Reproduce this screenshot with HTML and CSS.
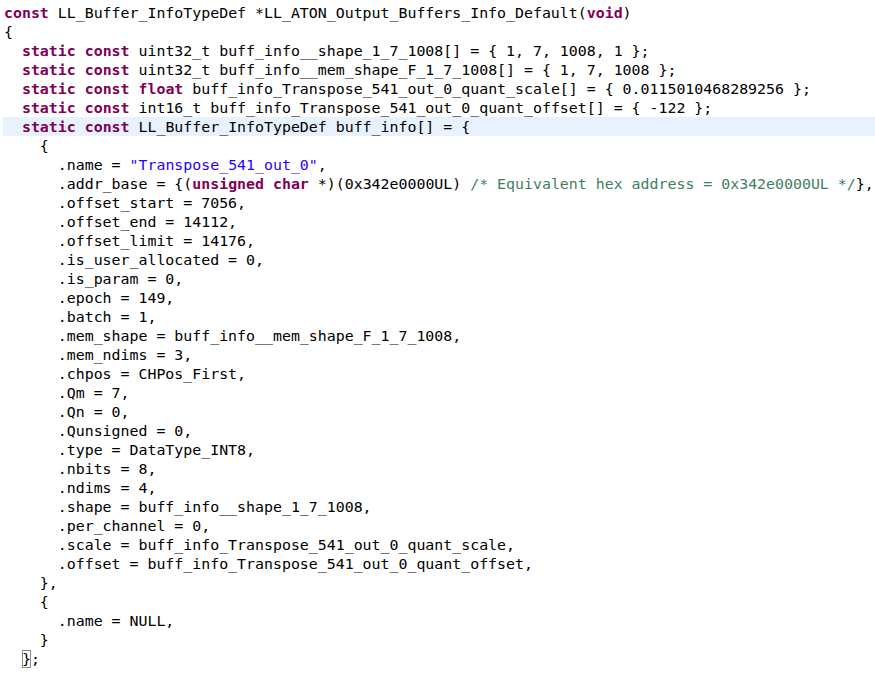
FILE: index.html
```html
<!DOCTYPE html>
<html>
<head>
<meta charset="utf-8">
<link rel="stylesheet" href="styles.css">
</head>
<body>
<div class="editor">
<div class="ln"><span class="kw">const</span> LL_Buffer_InfoTypeDef *LL_ATON_Output_Buffers_Info_Default(<span class="kw">void</span>)</div>
<div class="ln">{</div>
<div class="ln">  <span class="kw">static</span> <span class="kw">const</span> uint32_t buff_info__shape_1_7_1008[] = { 1, 7, 1008, 1 };</div>
<div class="ln">  <span class="kw">static</span> <span class="kw">const</span> uint32_t buff_info__mem_shape_F_1_7_1008[] = { 1, 7, 1008 };</div>
<div class="ln">  <span class="kw">static</span> <span class="kw">const</span> <span class="kw">float</span> buff_info_Transpose_541_out_0_quant_scale[] = { 0.0115010468289256 };</div>
<div class="ln">  <span class="kw">static</span> <span class="kw">const</span> int16_t buff_info_Transpose_541_out_0_quant_offset[] = { -122 };</div>
<div class="ln current">  <span class="kw">static</span> <span class="kw">const</span> LL_Buffer_InfoTypeDef buff_info[] = {</div>
<div class="ln">    {</div>
<div class="ln">      .name = <span class="str">"Transpose_541_out_0"</span>,</div>
<div class="ln">      .addr_base = {(<span class="kw">unsigned</span> <span class="kw">char</span> *)(0x342e0000UL) <span class="cm">/* Equivalent hex address = 0x342e0000UL */</span>},</div>
<div class="ln">      .offset_start = 7056,</div>
<div class="ln">      .offset_end = 14112,</div>
<div class="ln">      .offset_limit = 14176,</div>
<div class="ln">      .is_user_allocated = 0,</div>
<div class="ln">      .is_param = 0,</div>
<div class="ln">      .epoch = 149,</div>
<div class="ln">      .batch = 1,</div>
<div class="ln">      .mem_shape = buff_info__mem_shape_F_1_7_1008,</div>
<div class="ln">      .mem_ndims = 3,</div>
<div class="ln">      .chpos = CHPos_First,</div>
<div class="ln">      .Qm = 7,</div>
<div class="ln">      .Qn = 0,</div>
<div class="ln">      .Qunsigned = 0,</div>
<div class="ln">      .type = DataType_INT8,</div>
<div class="ln">      .nbits = 8,</div>
<div class="ln">      .ndims = 4,</div>
<div class="ln">      .shape = buff_info__shape_1_7_1008,</div>
<div class="ln">      .per_channel = 0,</div>
<div class="ln">      .scale = buff_info_Transpose_541_out_0_quant_scale,</div>
<div class="ln">      .offset = buff_info_Transpose_541_out_0_quant_offset,</div>
<div class="ln">    },</div>
<div class="ln">    {</div>
<div class="ln">      .name = NULL,</div>
<div class="ln">    }</div>
<div class="ln">  <span class="match">}</span>;</div>
</div>
</body>
</html>
```
FILE: styles.css
```css
html, body {
  margin: 0;
  padding: 0;
  background: #ffffff;
  overflow: hidden;
}
.editor {
  padding-top: 3px;
  padding-left: 3px;
  font-family: "DejaVu Sans Mono", "Liberation Mono", monospace;
  font-size: 14.9px;
  color: #000000;
}
.ln {
  height: 19px;
  line-height: 21px;
  white-space: pre;
  padding-left: 1px;
}
.current {
  background: #e8f2fe;
}
.kw {
  color: #7f0055;
  font-weight: bold;
}
.str {
  color: #2a00ff;
}
.cm {
  color: #3f7f5f;
}
.match {
  outline: 1px solid #8c8c8c;
  outline-offset: -1px;
}
```
